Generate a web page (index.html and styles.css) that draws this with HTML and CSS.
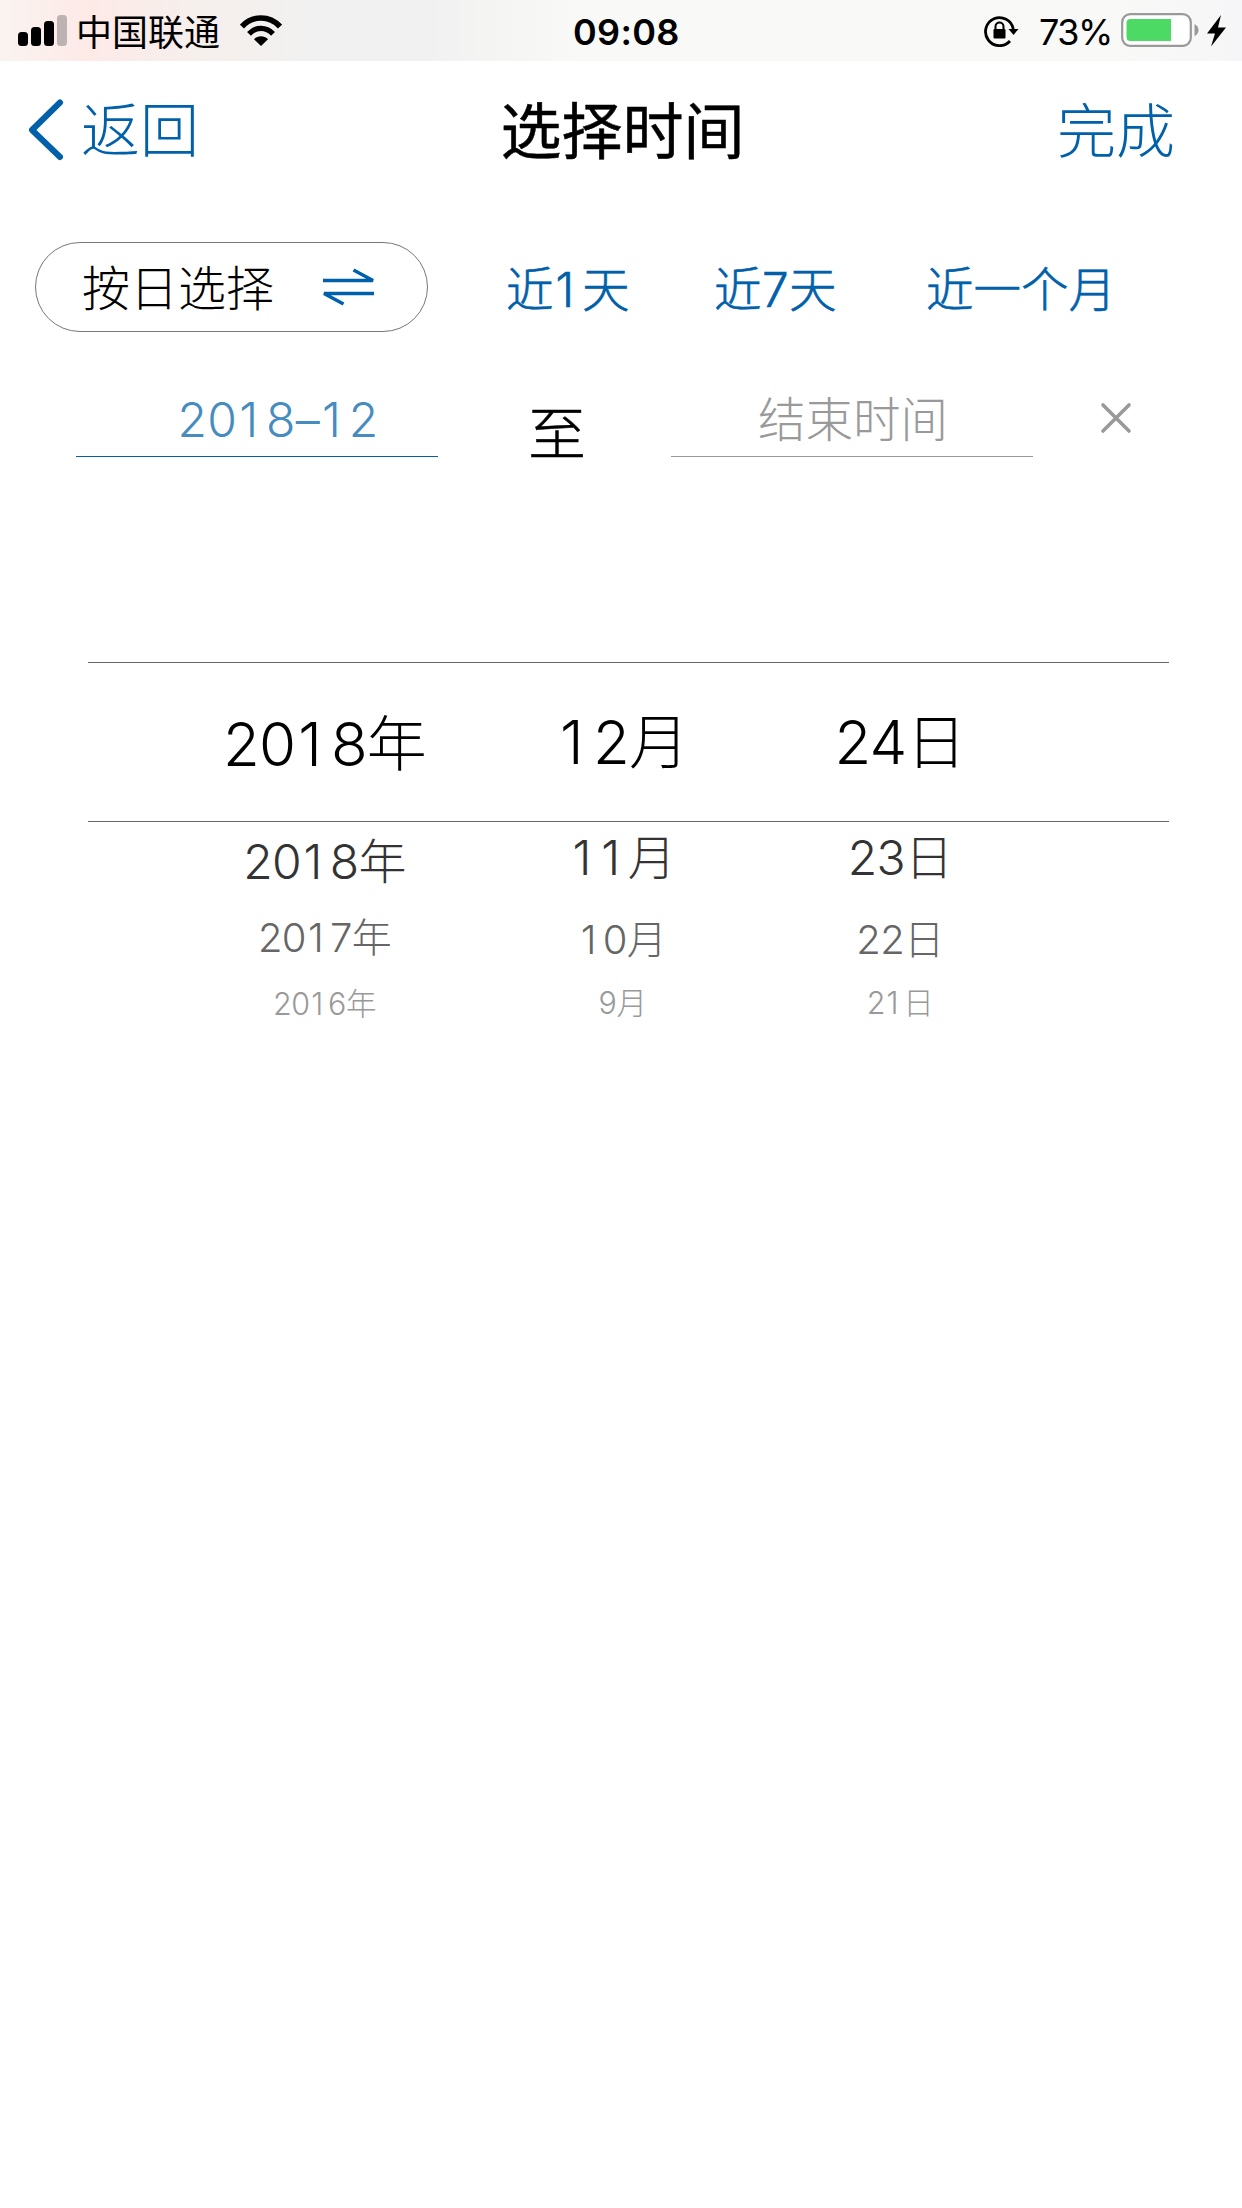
FILE: index.html
```html
<!DOCTYPE html>
<html lang="zh-CN">
<head>
<meta charset="utf-8">
<title>选择时间</title>
<link rel="stylesheet" href="styles.css">
</head>
<body>
<div class="status">
  <div class="status-left">
    <svg class="signal" width="49" height="31" viewBox="0 0 49 31"><rect x="0" y="17" width="10" height="14" rx="3.5"/><rect x="13" y="12" width="10" height="19" rx="3.5"/><rect x="26" y="6" width="10" height="25" rx="3.5"/><rect x="39" y="0" width="10" height="31" rx="3.5" fill="#bdb3b2"/></svg>
    <span class="carrier">中国联通</span>
    <svg class="wifi" width="42" height="31" viewBox="0 0 42 31"><g fill="none" stroke="#000"><path d="M2 11.500C12.500 .1 29.500 .1 40 11.500" stroke-width="5.600"/><path d="M9 18.800C16 11.500 26 11.500 33 18.800" stroke-width="5.400"/></g><path d="M14 24.200C18 20.400 24 20.400 28 24.200L21 31Z"/></svg>
  </div>
  <span class="clock">09:08</span>
  <div class="status-right">
    <svg class="lock" width="36" height="32" viewBox="0 0 36 32"><path d="M26 26A14 14 0 1 1 29.300 14" fill="none" stroke="#000" stroke-width="2.800"/><path d="M24.500 14H34.500L29.500 20Z"/><rect x="9.500" y="14" width="12" height="9.500" rx="1.200"/><path d="M11.500 15V11.500a4 4 0 0 1 8 0V15" fill="none" stroke="#000" stroke-width="2"/></svg>
    <span class="percent">73%</span>
    <svg class="battery" width="78" height="34" viewBox="0 0 78 34"><rect x="1.200" y="1.200" width="68.600" height="31.600" rx="8" fill="#fff" stroke="#999" stroke-width="2.200"/><path d="M9.500 6H50V28H9.500A4 4 0 0 1 5.500 24V10A4 4 0 0 1 9.500 6Z" fill="#4cd964"/><path d="M73.500 11Q77.500 13 77.500 17T73.500 23Z" fill="#999"/></svg>
    <svg class="bolt" width="19" height="32" viewBox="0 0 19 32"><path d="M14 0L0 18.500H8L4 31.500L19 12.500H11Z"/></svg>
  </div>
</div>
<header class="nav">
  <div class="back"><svg width="36" height="64" viewBox="0 0 36 64"><path d="M32 4.500L4 32L32 59" fill="none" stroke="#0060aa" stroke-width="6" stroke-linecap="round" stroke-linejoin="round"/></svg><span>返回</span></div>
  <h1 class="title">选择时间</h1>
  <span class="done">完成</span>
</header>
<div class="filters">
  <div class="mode"><span>按日选择</span><svg width="51" height="38" viewBox="0 0 51 38"><g fill="none" stroke="#0060aa" stroke-width="3.400"><path d="M0 12.500H50L30.500 2"/><path d="M51 25.500H1L20.500 36"/></g></svg></div>
  <span class="quick day">近<i class="one">1</i>天</span>
  <span class="quick week">近7天</span>
  <span class="quick month">近一个月</span>
</div>
<div class="range">
  <div class="field start">20<i class="one">1</i>8–<i class="one">1</i>2</div>
  <span class="to">至</span>
  <div class="field end">结束时间</div>
  <svg class="clear" width="32" height="32" viewBox="0 0 32 32"><path d="M3 3L29 29M29 3L3 29" fill="none" stroke="#999" stroke-width="3.600" stroke-linecap="round"/></svg>
</div>
<div class="picker">
  <div class="row selected"><span class="year">20<i class="one">1</i>8年</span><span class="month-cell"><i class="one">1</i>2月</span><span>24日</span></div>
  <div class="row near"><span class="year">20<i class="one">1</i>8年</span><span class="month-cell"><i class="one">1</i><i class="one">1</i>月</span><span>23日</span></div>
  <div class="row mid"><span class="year">20<i class="one">1</i>7年</span><span class="month-cell"><i class="one">1</i>0月</span><span>22日</span></div>
  <div class="row far"><span class="year">20<i class="one">1</i>6年</span><span class="month-cell">9月</span><span>2<i class="one">1</i>日</span></div>
</div>
</body>
</html>
```
FILE: styles.css
```css
* { box-sizing: border-box; }
body {
  margin: 0;
  height: 2208px;
  background: #fff;
  color: #000;
  font-family: Inter, "Noto Sans CJK SC", sans-serif;
  font-weight: 300;
}
svg { display: block; flex: none; }
span, .field, h1 { white-space: nowrap; }

/* gives the narrow digit 1 the same advance as the other digits */
.one {
  display: inline-block;
  width: .6em;
  padding-right: .12em;
  text-align: center;
  font-style: normal;
}

.status {
  display: grid;
  grid-template-columns: 1fr 110px 1fr;
  height: 61px;
  background: linear-gradient(90deg, #faf3f0 0, #fdeae7 90px, #f6efec 190px, #f1f1f1 320px, #f1f1f1 430px, #f9f9f7 580px, #f9f9f7 1100px, #f6f6f8 1242px);
  font-size: 36px;
  font-weight: 400;
  line-height: 61px;
}
.status-left, .status-right { display: flex; }
.status-left { padding-left: 18px; }
.signal { margin-top: 15px; }
.carrier { width: 173px; padding-left: 9px; font-size: 36px; line-height: 66px; }
.wifi { margin-top: 15px; }
.clock { padding-left: 7px; font-weight: 600; font-size: 36px; line-height: 64px; letter-spacing: .3px; }
.status-right { justify-content: flex-end; padding-right: 16px; }
.lock { margin: 15px 19px 0 0; }
.percent { width: 82px; line-height: 64px; letter-spacing: -1.5px; }
.battery { margin-top: 13px; }
.bolt { margin: 15px 0 0 8px; }

.nav {
  display: grid;
  grid-template-columns: 1fr auto 1fr;
  height: 140px;
  line-height: 141px;
  color: #0060aa;
  font-size: 59px;
}
.back { display: flex; align-items: center; height: 139px; line-height: 141px; padding-left: 28px; gap: 17px; }
.back svg { margin-top: -2px; }
.title { margin: 0; padding-left: 3px; font-size: 61px; font-weight: 400; line-height: 142px; color: #000; -webkit-text-stroke: .5px #000; }
.done { text-align: right; padding-right: 67px; }

.filters { display: flex; padding: 41px 0 0 35px; height: 171px; font-size: 48px; line-height: 92px; color: #0060aa; }
.mode {
  display: flex;
  align-items: center;
  width: 393px;
  height: 90px;
  padding-left: 46px;
  gap: 49px;
  border: 1px solid #777;
  border-radius: 46px;
  color: #000;
}
.mode span { padding-top: 3px; }
.quick { font-size: 47.500px; line-height: 96px; -webkit-text-stroke: .6px #0060aa; }
.day { margin-left: 78px; width: 208px; }
.week { width: 212px; letter-spacing: .5px; }

.range { display: flex; height: 290px; padding-left: 76px; font-size: 48px; }
.field { width: 362px; height: 85px; line-height: 96px; text-align: center; border-bottom: 1px solid #999; color: #999; }
.start { padding-left: 42px; border-color: #0060aa; color: #468cc0; letter-spacing: .3px; }
.end { padding-left: 2px; font-size: 47.500px; }
.to { width: 233px; padding: 15px 0 0 90px; font-size: 58px; line-height: 95px; -webkit-text-stroke: .5px #000; }
.clear { margin: 30px 0 0 67px; }

.picker { width: 1081px; margin-left: 88px; }
.row { display: grid; grid-template-columns: 473px 124px 430px; letter-spacing: -.015em; }
.row span { text-align: center; }
.row .month-cell { margin-left: -1px; }
.selected { height: 160px; line-height: 159px; font-size: 60px; border: solid #666; border-width: 1px 0; }
.selected .month-cell { margin: 0 0 0 -4px; }
.near { height: 74px; line-height: 71px; font-size: 48px; color: #333; }
.mid { height: 84px; line-height: 88px; font-size: 40px; color: #666; }
.far { height: 46px; line-height: 45px; font-size: 30.500px; color: #999; }
.selected .year { padding-top: 2px; }
.near .year { padding-top: 4px; }
.mid .year { margin-top: -2px; }
.far .year { padding-top: 1px; }
```
